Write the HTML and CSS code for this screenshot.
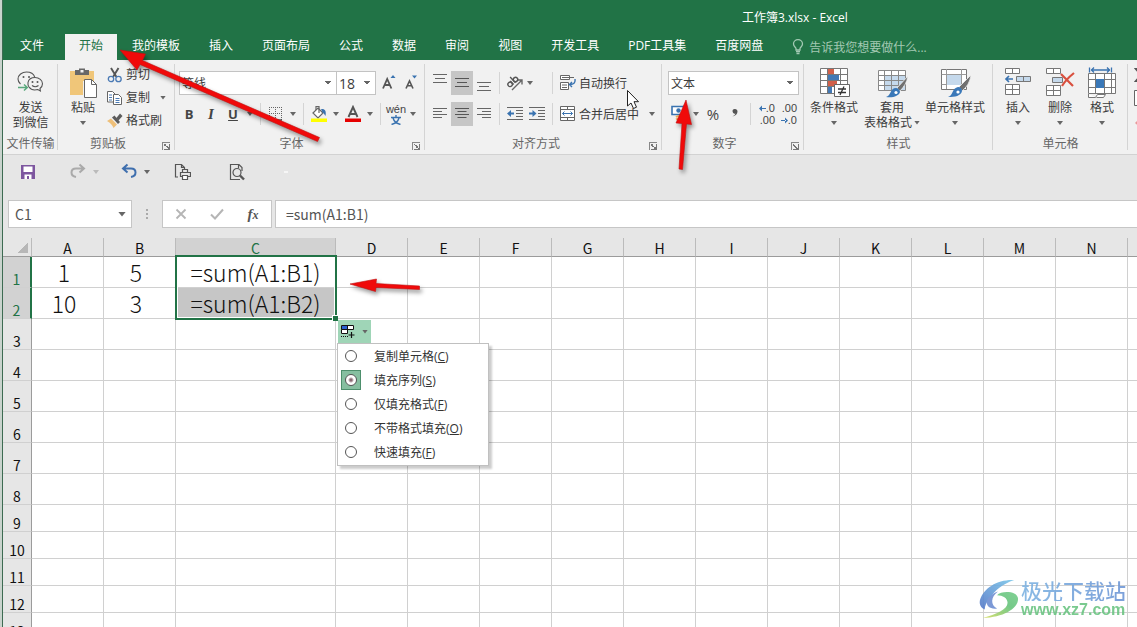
FILE: index.html
```html
<!DOCTYPE html>
<html lang="zh-CN">
<head>
<meta charset="utf-8">
<title>工作簿3.xlsx - Excel</title>
<link rel="stylesheet" href="styles.css">
</head>
<body>
<div class="app">
  <header class="titlebar"><h1 class="doc-title">工作簿3.xlsx - Excel</h1></header>
  <nav class="tabs">
    <button class="tab tab-file">文件</button>
    <button class="tab tab-active">开始</button>
    <button class="tab">我的模板</button>
    <button class="tab">插入</button>
    <button class="tab">页面布局</button>
    <button class="tab">公式</button>
    <button class="tab">数据</button>
    <button class="tab">审阅</button>
    <button class="tab">视图</button>
    <button class="tab">开发工具</button>
    <button class="tab">PDF工具集</button>
    <button class="tab">百度网盘</button>
    <button class="tab tell-me">
      <svg width="12" height="16" viewBox="0 0 12 16" fill="none" stroke="currentColor" stroke-width="1.3"><path d="M4 11V9.500C4 8.500 1.500 7.500 1.500 5a4.500 4.300 0 0 1 9 0C10.500 7.500 8 8.500 8 9.500V11z"/><path d="M4 12.500h4M4.500 14.500h3" stroke-width="1.600"/></svg>
      <span>告诉我您想要做什么...</span>
    </button>
  </nav>

  <div class="ribbon">
    <section class="group g-send">
      <div class="group-body row-top">
        <button class="big">
          <svg class="big-icon" width="28" height="32" viewBox="0 0 28 32" fill="none" stroke="#555" stroke-width="1.100"><path d="M3.500 17C1.800 15.500 1 14 1 12 1 8 5 5 9.500 5c4 0 7.200 2 8.200 5"/><path d="M12 20c-1-1.500-1.300-3-1-4.500.6-3 3.500-5 7-5 4.200 0 7.500 2.800 7.500 6.300 0 2-1 3.500-2.500 4.700l.4 2.500-2.600-1.500c-3 .8-6.800.3-8.800-2.500z"/><g fill="#555" stroke="none"><circle cx="6.500" cy="10" r="1"/><circle cx="12" cy="10" r="1"/><circle cx="15.500" cy="15" r="1"/><circle cx="20.500" cy="15" r="1"/></g><path d="M15 18.500c2 1.500 4.500 1.500 6.500 0"/><path d="M1 20.500h9M7 17.500l3.300 3L7 23.500" stroke="#5aa87c" stroke-width="1.500"/></svg>
          <span>发送</span><span>到微信</span>
        </button>
      </div>
      <div class="group-label">文件传输</div>
    </section>

    <section class="group g-clip">
      <div class="group-body row-top">
        <button class="big w-paste">
          <svg class="big-icon" width="30" height="32" viewBox="0 0 30 32"><path d="M2 4h24v10H15v14H2z" fill="#f0c679"/><path d="M7 3h4V1.500h6V3h4v5H7z" fill="#686868"/><rect x="12.500" y="3" width="3" height="2.500" fill="#f1f1f1"/><path d="M16.500 12.500h7l5 5v13h-12z" fill="#fff" stroke="#666"/><path d="M23.500 12.500v5h5" fill="none" stroke="#666"/></svg>
          <span>粘贴</span><i class="caret"></i>
        </button>
        <div class="stack">
          <button class="item"><svg width="16" height="16" viewBox="0 0 16 16" fill="none"><path d="M4 1l5.500 9M11.500 1L6 10" stroke="#555" stroke-width="1.900"/><circle cx="4" cy="12" r="2.700" stroke="#4a7ab5" stroke-width="1.300"/><circle cx="11.500" cy="12" r="2.700" stroke="#4a7ab5" stroke-width="1.300"/></svg><span>剪切</span></button>
          <button class="item"><svg width="16" height="16" viewBox="0 0 16 16" fill="#fff" stroke="#666"><path d="M.5 1.500h5l2.500 2.500v8H.5z"/><path d="M2 5h3M2 7.500h3M2 10h3" stroke="#4a7ab5"/><path d="M6.500 4.500h5l3 3v7h-8z"/><path d="M8.500 8.500h4M8.500 10.500h4M8.500 12.500h4" stroke="#4a7ab5"/></svg><span>复制</span><i class="caret"></i></button>
          <button class="item"><svg width="16" height="16" viewBox="0 0 16 16"><path d="M0 8l4-2.500 6 6L6.500 15c-1-3-3-5-6.500-7z" fill="#eebf78"/><path d="M5 4.500l2.500-2 5.500 6.500-2 2z" fill="#5c5c5c"/><path d="M9 5.500l4-5 2.500 2.500-4 4.500z" fill="#5c5c5c"/></svg><span>格式刷</span></button>
        </div>
      </div>
      <div class="group-label">剪贴板</div><button class="launcher" aria-label="剪贴板设置"></button>
    </section>

    <section class="group g-font">
      <div class="group-body rows">
        <div class="row"><select class="combo font-name" aria-label="字体"><option>等线</option></select><select class="combo font-size" aria-label="字号"><option>18</option></select><button class="ib grow" aria-label="增大字号"><svg width="16" height="18" viewBox="0 0 16 18"><path d="M2 14.500L6.200 5l4.200 9.500M3.800 11h5" fill="none" stroke="#555" stroke-width="1.800"/><path d="M9.500 4l2.500-3 2.500 3z" fill="#3a73b0"/></svg></button><button class="ib" aria-label="减小字号"><svg width="16" height="18" viewBox="0 0 16 18"><path d="M2 14.500L5.500 7 9 14.500M3.500 11.700h4" fill="none" stroke="#555" stroke-width="1.600"/><path d="M8 1.500l2.500 3 2.500-3z" fill="#3a73b0"/></svg></button></div>
        <div class="row"><button class="ib glyph"><b>B</b></button><button class="ib glyph"><em>I</em></button><button class="ib glyph"><u>U</u></button><button class="cb" aria-label="下划线"><i class="caret"></i></button><i class="sep"></i><button class="ib" aria-label="边框"><svg width="14" height="14" viewBox="0 0 14 14" stroke="#666" fill="none"><path d="M0 .5h13M0 6.500h13M.5 0v13M6.500 0v13M12.500 0v13" stroke-dasharray="1 1"/><path d="M0 13h13" stroke="#444" stroke-width="1.300"/></svg></button><button class="cb" aria-label="边框选项"><i class="caret"></i></button><i class="sep"></i><button class="ib" aria-label="填充颜色"><svg width="18" height="18" viewBox="0 0 18 18"><path d="M3 8l5-5 5 5-5 5z" fill="#fff" stroke="#666" stroke-width="1.200"/><path d="M6 5V1.500h3V8" fill="none" stroke="#666" stroke-width="1.200"/><path d="M11 4c4-.5 5.500 2 4.500 7-1-1-1.500-3-3-3.500z" fill="#3a73b0"/><path d="M1 13.500h16V17H1z" fill="#ff0"/></svg></button><button class="cb" aria-label="填充选项"><i class="caret"></i></button><button class="ib" aria-label="字体颜色"><svg width="18" height="18" viewBox="0 0 18 18"><path d="M4.500 12L9 2l4.500 10M6 9h6" fill="none" stroke="#555" stroke-width="1.900"/><path d="M1 13.500h16V17H1z" fill="#e60000"/></svg></button><button class="cb" aria-label="颜色选项"><i class="caret"></i></button><i class="sep"></i><button class="ib pinyin"><span>wén</span><svg width="10" height="10" viewBox="0 0 10 10" fill="none" stroke="#3a73b0" stroke-width="1.400"><path d="M5 0v2M0 2.500h10M2 3c1 3.500 3.500 5.500 7.500 6.500M8 3C7 6.500 4.500 8.500.5 9.500"/></svg></button><button class="cb" aria-label="拼音选项"><i class="caret"></i></button></div>
      </div>
      <div class="group-label">字体</div><button class="launcher" aria-label="字体设置"></button>
    </section>

    <section class="group g-align">
      <div class="group-body rows">
        <div class="row"><button class="ib" aria-label="顶端对齐"><svg width="14" height="18" viewBox="0 0 14 18" stroke="#666"><path d="M0 .5h14M2 4.500h10M0 8.500h14"/></svg></button><button class="ib on" aria-label="垂直居中"><svg width="14" height="18" viewBox="0 0 14 18" stroke="#555"><path d="M0 4.500h14M2 8.500h10M0 12.500h14"/></svg></button><button class="ib" aria-label="底端对齐"><svg width="14" height="18" viewBox="0 0 14 18" stroke="#666"><path d="M0 8.500h14M2 12.500h10M0 16.500h14"/></svg></button><i class="sep"></i><button class="orient" aria-label="方向"><svg width="18" height="18" viewBox="0 0 18 18" fill="none" stroke="#555" stroke-width="1.400"><path d="M6 16L15.500 6.500M11.500 6h4.500v4.500" stroke="#666"/><g transform="rotate(-42 6 8)"><circle cx="3" cy="8.500" r="2.200"/><path d="M5.500 6v5M8 3v8"/><circle cx="10.300" cy="8.500" r="2.200"/></g></svg><i class="caret"></i></button><i class="sep"></i><button class="item"><svg width="16" height="16" viewBox="0 0 16 16" fill="none" stroke="#666"><path d="M.5.500h9v4h-9zM.5 7.500h8v7h-8z" fill="#fff"/><path d="M2 2.500h12M2 10h5M2 12.500h5"/><path d="M15 4c.5 4-1.500 5.500-5 5.500M12 7l-2.500 2.500L12 12" stroke="#3a73b0" stroke-width="1.400"/></svg><span>自动换行</span></button></div>
        <div class="row"><button class="ib" aria-label="左对齐"><svg width="14" height="14" viewBox="0 0 14 14" stroke="#666"><path d="M0 1.500h14M0 4.500h9M0 7.500h14M0 10.500h9"/></svg></button><button class="ib on" aria-label="居中"><svg width="14" height="14" viewBox="0 0 14 14" stroke="#555"><path d="M0 1.500h14M2.500 4.500h9M0 7.500h14M2.500 10.500h9"/></svg></button><button class="ib" aria-label="右对齐"><svg width="14" height="14" viewBox="0 0 14 14" stroke="#666"><path d="M0 1.500h14M5 4.500h9M0 7.500h14M5 10.500h9"/></svg></button><i class="sep"></i><button class="ib" aria-label="减少缩进量"><svg width="16" height="14" viewBox="0 0 16 14" stroke="#666"><path d="M0 .5h16M9 3.500h7M9 6.500h7M9 9.500h7M0 12.500h16"/><path d="M7 6.500H3" stroke="#3a73b0" stroke-width="2"/><path d="M0 6.500l4-3.500v7z" fill="#3a73b0" stroke="none"/></svg></button><button class="ib" aria-label="增加缩进量"><svg width="16" height="14" viewBox="0 0 16 14" stroke="#666"><path d="M0 .5h16M9 3.500h7M9 6.500h7M9 9.500h7M0 12.500h16"/><path d="M0 6.500h4" stroke="#3a73b0" stroke-width="2"/><path d="M7.500 6.500L3.500 3v7z" fill="#3a73b0" stroke="none"/></svg></button><i class="sep"></i><button class="item"><svg width="16" height="16" viewBox="0 0 16 16" fill="#fff" stroke="#666"><path d="M.5.500h14v14H.5zM.5 3.500h14M.5 11.500h14M7.500.500v3M7.500 11.500v3"/><path d="M2.500 7.500h10M4.500 5.500l-2 2 2 2M10.500 5.500l2 2-2 2" stroke="#3a73b0" fill="none"/></svg><span>合并后居中</span><i class="caret"></i></button></div>
      </div>
      <div class="group-label">对齐方式</div><button class="launcher" aria-label="对齐设置"></button>
    </section>

    <section class="group g-num">
      <div class="group-body rows">
        <div class="row"><select class="combo num-format" aria-label="数字格式"><option>文本</option></select></div>
        <div class="row"><button class="ib" aria-label="会计数字格式"><svg width="16" height="18" viewBox="0 0 16 18"><path d="M1 1.500h14v8H1z" fill="#fff" stroke="#3a73b0" stroke-width="1.600"/><circle cx="7.500" cy="5.500" r="2.200" fill="#3a73b0"/><path d="M5 12c2-1.500 6-1.500 8 0M5 14.500c2-1.500 6-1.500 8 0" fill="none" stroke="#eeab5c" stroke-width="1.800"/></svg></button><button class="cb" aria-label="货币选项"><i class="caret"></i></button><button class="ib percent">%</button><button class="ib" aria-label="千位分隔样式"><svg width="8" height="14" viewBox="0 0 8 14"><path d="M4 2a2.300 2.300 0 1 0 .5 4.500C4 8 3 8.500 1.500 9.500 4.500 9 6.500 7 6.500 4.500 6.500 3 5.500 2 4 2z" fill="#555"/></svg></button><i class="sep"></i><button class="ib decimals"><span><svg width="7" height="7" viewBox="0 0 7 7"><path d="M0 3.500l3-3v6zM2 3h5v1H2z" fill="#3a73b0"/></svg>.0</span><span>.00</span></button><button class="ib decimals"><span>.00</span><span><svg width="7" height="7" viewBox="0 0 7 7"><path d="M7 3.500l-3-3v6zM0 3h5v1H0z" fill="#3a73b0"/></svg>.0</span></button></div>
      </div>
      <div class="group-label">数字</div><button class="launcher" aria-label="数字设置"></button>
    </section>

    <section class="group g-style">
      <div class="group-body row-top">
        <button class="big w-cond"><svg class="big-icon" width="32" height="32" viewBox="0 0 32 32"><path d="M2.500 1.500h27v25h-27z" fill="#fff"/><path d="M10 2h6v5h-6zM10 14h9v5h-9z" fill="#d2604a"/><path d="M10 8h11v5H10zM10 20h4v6h-4z" fill="#4479b5"/><path d="M2.500 1.500h27v25h-27zM2.500 7.500h27M2.500 13.500h27M2.500 19.500h27M9.500 1v25M22.500 1v25" fill="none" stroke="#777"/><path d="M16.500 17.500h15v12h-15z" fill="#fff" stroke="#666"/><path d="M20 22h8M20 25.500h8M26 19.500l-4 8.500" stroke="#333" stroke-width="1.300"/></svg><span>条件格式</span><i class="caret"></i></button>
        <button class="big w-table"><svg class="big-icon" width="32" height="32" viewBox="0 0 32 32"><path d="M2.500 3.500h27v20h-27z" fill="#fff"/><path d="M9 9h20v14H9z" fill="#c5d9ec"/><path d="M2.500 3.500h27v20h-27zM2.500 8.500h27M2.500 13.500h27M2.500 18.500h27M8.500 3v20M15.500 3v20M22.500 3v20" fill="none" stroke="#888"/><path d="M32 9L21 21l3 3c4-4 7-9 8-15z" fill="#707070" stroke="#f1f1f1" stroke-width=".8"/><path d="M20 21c2 0 4 2 4 4-1 4-7 6-14 5 5-1 4-9 10-9z" fill="#3a78b8"/><circle cx="20" cy="25.500" r="1.600" fill="#fff"/></svg><span>套用</span><span class="with-caret">表格格式<i class="caret"></i></span></button>
        <button class="big w-cell"><svg class="big-icon" width="32" height="32" viewBox="0 0 32 32"><path d="M2.500 2.500h25v20h-25z" fill="#fff" stroke="#777"/><path d="M2.500 7.500h25M2.500 17.500h25M7.500 2v20M22.500 2v20" stroke="#999"/><path d="M8 8h14v10H8z" fill="#c5d9ec"/><path d="M32 8L20 20l3 4c5-4 8-9 9-16z" fill="#707070" stroke="#f1f1f1" stroke-width=".8"/><path d="M19 20c3 0 4 2 4 4-1 5-7 6-14 6 5-1 4-9 10-10z" fill="#3a78b8"/><circle cx="19" cy="25" r="1.600" fill="#fff"/></svg><span>单元格样式</span><i class="caret"></i></button>
      </div>
      <div class="group-label">样式</div>
    </section>

    <section class="group g-cells">
      <div class="group-body row-top">
        <button class="big w-small"><svg class="big-icon" width="28" height="32" viewBox="0 0 28 32" fill="#fff" stroke="#777"><path d="M1.500 1.500h14v5h-14zM8.500 1.500v5M1.500 17.500h14v10h-14zM1.500 22.500h14M8.500 17.500v10"/><path d="M12.500 9.500h14v5h-14zM19.500 9.500v5" fill="#c5d9ec"/><path d="M2 12h7M5 9l-3 3 3 3" stroke="#3a73b0" stroke-width="1.700" fill="none"/></svg><span>插入</span><i class="caret"></i></button>
        <button class="big w-small"><svg class="big-icon" width="30" height="32" viewBox="0 0 30 32" fill="#fff" stroke="#777"><path d="M1.500 1.500h14v5h-14zM8.500 1.500v5M1.500 18.500h14v10h-14zM1.500 23.500h14M8.500 18.500v10"/><path d="M7.500 10.500h10v5h-10z" fill="#c5d9ec"/><path d="M16 7l12 12M29 6C24 10 20 14 17 19" stroke="#d9503f" stroke-width="2.200" fill="none"/></svg><span>删除</span><i class="caret"></i></button>
        <button class="big w-small"><svg class="big-icon" width="30" height="32" viewBox="0 0 30 32" fill="#fff" stroke="#777"><path d="M2.500.500v5M24.500.500v5M4 3h19M7 .500L4.500 3 7 5.500M20 .500L22.500 3 20 5.500" stroke="#3a73b0" fill="none" stroke-width="1.300"/><path d="M1.500 6.500h27v20h-27zM1.500 12.500h27M1.500 20.500h27M8.500 6v20M17.500 6v20M24.500 6v20"/><path d="M9 12h8v9H9z" fill="#3a78b8" stroke="none"/><path d="M1.500 27v3.500h7l2-3h8l-2 3h-7"/></svg><span>格式</span><i class="caret"></i></button>
      </div>
      <div class="group-label">单元格</div>
    </section>
    <section class="group g-edit">
      <div class="group-body stack"><button class="item" aria-label="自动求和"><svg width="16" height="16" viewBox="0 0 16 16" fill="none" stroke="#555" stroke-width="2"><path d="M13 2H2l5 6-5 6h11"/></svg></button><button class="item" aria-label="填充"><svg width="16" height="16" viewBox="0 0 16 16"><path d="M.5.500h13v15H.5z" fill="#fff" stroke="#666"/></svg></button><button class="item" aria-label="清除"><svg width="16" height="16" viewBox="0 0 16 16"><path d="M1 10l7-7 6 5-7 7z" fill="#e79a9a"/></svg></button></div>
    </section>
  </div>

  <div class="qat">
    <button class="qb" aria-label="保存"><svg width="16" height="16" viewBox="0 0 16 16"><path d="M1 1h14v14H1z" fill="#7d569f"/><path d="M3.500 2.500h9v5.500h-9zM4.500 10.500h7V15H9v-3H7v3H4.500z" fill="#fff"/></svg></button>
    <span class="qpair"><button class="qb" aria-label="恢复"><svg width="16" height="16" viewBox="0 0 16 16" fill="none" stroke="#aaa" stroke-width="2"><path d="M9.500 1.500L14 5.500l-4.500 4M14 5.500H6c-3 0-4.500 1.800-4.500 4S3 13.500 6 14"/></svg></button><button class="cb" aria-label="恢复选项"><i class="caret faint"></i></button></span>
    <span class="qpair"><button class="qb" aria-label="撤消"><svg width="16" height="16" viewBox="0 0 16 16" fill="none" stroke="#3f6fae" stroke-width="2"><path d="M6.500 1.500L2 5.500l4.500 4M2 5.500h8c3 0 4.500 1.800 4.500 4S13 13.500 10 14"/></svg></button><button class="cb" aria-label="撤消选项"><i class="caret"></i></button></span>
    <button class="qb" aria-label="快速打印"><svg width="18" height="18" viewBox="0 0 18 18" fill="none" stroke="#555" stroke-width="1.200"><path d="M5 14H2.500V1.500h6l3 3V6M8.500 1.500v3h3"/><path d="M9.500 9V6.500h5V9M7.500 9.500h10v4h-10z"/><path d="M9.500 12.500h5v4h-5z" fill="#fff"/></svg></button>
    <button class="qb" aria-label="打印预览"><svg width="18" height="18" viewBox="0 0 18 18" fill="none" stroke="#555" stroke-width="1.200"><path d="M15 8V4.500l-3-3H3.500v15H13M11.500 1.500V5"/><circle cx="10" cy="9.500" r="4"/><path d="M13 12.500l4 4" stroke-width="2.400"/></svg></button>
    <i class="qmore"></i>
  </div>

  <div class="formula">
    <div class="namebox"><input value="C1" aria-label="名称框"><button class="cb" aria-label="名称列表"><i class="caret wide"></i></button></div>
    <i class="dots"></i>
    <div class="fx-box">
      <button aria-label="取消"><svg width="12" height="12" viewBox="0 0 12 12"><path d="M1.500 1.500l9 9M10.500 1.500l-9 9" stroke="#b5b5b5" stroke-width="1.800"/></svg></button>
      <button aria-label="输入"><svg width="14" height="12" viewBox="0 0 14 12"><path d="M1 6.500l4 4 8-9" fill="none" stroke="#b5b5b5" stroke-width="2"/></svg></button>
      <button class="fx"><em>f<small>x</small></em></button>
    </div>
    <input class="fx-input" value="=sum(A1:B1)" aria-label="编辑栏">
  </div>

  <main class="sheet">
    <table class="grid">
      <colgroup><col class="c-head"><col><col><col class="c-wide"><col span="12"></colgroup>
      <thead><tr><th class="corner"></th><th>A</th><th>B</th><th class="sel">C</th><th>D</th><th>E</th><th>F</th><th>G</th><th>H</th><th>I</th><th>J</th><th>K</th><th>L</th><th>M</th><th>N</th><th></th></tr></thead>
      <tbody>
        <tr class="tall"><th class="sel">1</th><td class="num">1</td><td class="num">5</td>
          <td class="anchor">=sum(A1:B1)
            <div class="selection"><i class="handle"></i></div>
            <div class="autofill">
              <button class="af-btn" aria-label="自动填充选项"><svg width="16" height="16" viewBox="0 0 16 16"><path d="M1 1h13v4.500H7V10H1z" fill="#fff"/><path d="M1.500 1.500h6v4h-6z" fill="#2a5fd0"/><path d="M1.500 1.500h12v4h-12zM7.500 1.500v8h-6v-4" fill="none" stroke="#111"/><path d="M1 12.500h8" stroke="#111" stroke-dasharray="1 1"/><path d="M11.500 8v6M8.500 11h6" stroke="#111" stroke-width="1.200"/></svg><i class="caret"></i></button>
              <div class="af-menu">
                <label class="opt"><input type="radio" name="fill"><span>复制单元格(<u>C</u>)</span></label>
                <label class="opt"><input type="radio" name="fill" checked><span>填充序列(<u>S</u>)</span></label>
                <label class="opt"><input type="radio" name="fill"><span>仅填充格式(<u>F</u>)</span></label>
                <label class="opt"><input type="radio" name="fill"><span>不带格式填充(<u>O</u>)</span></label>
                <label class="opt"><input type="radio" name="fill"><span>快速填充(<u>F</u>)</span></label>
              </div>
            </div>
          </td><td></td><td></td><td></td><td></td><td></td><td></td><td></td><td></td><td></td><td></td><td></td><td></td></tr>
        <tr class="tall"><th class="sel">2</th><td class="num">10</td><td class="num">3</td><td class="filled">=sum(A1:B2)</td><td></td><td></td><td></td><td></td><td></td><td></td><td></td><td></td><td></td><td></td><td></td><td></td></tr>
        <tr class="tall"><th>3</th><td></td><td></td><td></td><td></td><td></td><td></td><td></td><td></td><td></td><td></td><td></td><td></td><td></td><td></td><td></td></tr>
        <tr class="tall"><th>4</th><td></td><td></td><td></td><td></td><td></td><td></td><td></td><td></td><td></td><td></td><td></td><td></td><td></td><td></td><td></td></tr>
        <tr class="tall"><th>5</th><td></td><td></td><td></td><td></td><td></td><td></td><td></td><td></td><td></td><td></td><td></td><td></td><td></td><td></td><td></td></tr>
        <tr class="tall"><th>6</th><td></td><td></td><td></td><td></td><td></td><td></td><td></td><td></td><td></td><td></td><td></td><td></td><td></td><td></td><td></td></tr>
        <tr class="tall"><th>7</th><td></td><td></td><td></td><td></td><td></td><td></td><td></td><td></td><td></td><td></td><td></td><td></td><td></td><td></td><td></td></tr>
        <tr class="tall"><th>8</th><td></td><td></td><td></td><td></td><td></td><td></td><td></td><td></td><td></td><td></td><td></td><td></td><td></td><td></td><td></td></tr>
        <tr><th>9</th><td></td><td></td><td></td><td></td><td></td><td></td><td></td><td></td><td></td><td></td><td></td><td></td><td></td><td></td><td></td></tr>
        <tr><th>10</th><td></td><td></td><td></td><td></td><td></td><td></td><td></td><td></td><td></td><td></td><td></td><td></td><td></td><td></td><td></td></tr>
        <tr><th>11</th><td></td><td></td><td></td><td></td><td></td><td></td><td></td><td></td><td></td><td></td><td></td><td></td><td></td><td></td><td></td></tr>
        <tr><th>12</th><td></td><td></td><td></td><td></td><td></td><td></td><td></td><td></td><td></td><td></td><td></td><td></td><td></td><td></td><td></td></tr>
        <tr><th>13</th><td></td><td></td><td></td><td></td><td></td><td></td><td></td><td></td><td></td><td></td><td></td><td></td><td></td><td></td><td></td></tr>
      </tbody>
    </table>
  </main>
</div>

<svg class="marks" width="1137" height="627" viewBox="0 0 1137 627" aria-hidden="true">
  <g fill="#f00a0a" stroke="#c01010" stroke-width=".6">
    <path d="M120 50L145.500 54 142.500 60.500 319.500 137.500 317.500 141.500 140 64.500 137 70z"/>
    <path d="M686 100L691.500 124.500 686.500 124 682.500 169.500 679 169 682 123.500 676 123z"/>
    <path d="M350 284L376.500 279 376 283.500 419.500 286 419.500 289.500 376 287.500 375.500 291.500z"/>
  </g>
  <path d="M627.500 90.500v15.500l3.500-3 2.500 5.500 3-1.300-2.500-5.500h4.500z" fill="#fff" stroke="#222"/>
</svg>

<div class="watermark">
  <svg width="42" height="40" viewBox="0 0 42 42">
    <defs><linearGradient id="wb" x1="0" y1="1" x2="1" y2="0"><stop offset="0" stop-color="#5578c8"/><stop offset="1" stop-color="#7cc8ea"/></linearGradient><linearGradient id="wg" x1="0" y1="1" x2="1" y2="0"><stop offset="0" stop-color="#d8dd62"/><stop offset=".6" stop-color="#67c47c"/><stop offset="1" stop-color="#74cc8a"/></linearGradient></defs>
    <path d="M37 1C20 0 5 9 1 22c-1 5 1 8 5 10 0-4 2-8 5-11 5-9 14-16 26-20z" fill="url(#wb)"/>
    <path d="M20 13c-8 6-8 14-1 18-7 1-11-2-11-7 1-5 6-9 12-11z" fill="#6e8fd2"/>
    <path d="M19 17c4-5 22-5 22 4 0 10-15 19-37 20 14-4 26-9 26-16 0-5-5-8-11-8z" fill="url(#wg)"/>
  </svg>
  <div class="wm-text"><span class="wm-name">极光下载站</span><span class="wm-url">www.xz7.com</span></div>
</div>
</body>
</html>
```
FILE: styles.css
```css
* { box-sizing: border-box; }
body {
  margin: 0;
  height: 100vh;
  overflow: hidden;
  position: relative;
  background: #c9d3cd;
  font: 12px/15px "Open Sans", "Noto Sans CJK SC", sans-serif;
  color: #3c3c3c;
}
button, input, select { font: inherit; color: inherit; border: 0; margin: 0; padding: 0; background: none; }
button { white-space: nowrap; }
svg { display: block; flex: none; }
.app {
  display: flex;
  flex-direction: column;
  height: 100%;
  margin-left: 2px;
  border-left: 1px solid #3d6b52;
  background: #e6e6e6;
  overflow: hidden;
}

/* title and tabs */
.titlebar { flex: none; height: 34px; padding: 10px 0 0 739px; background: #217346; }
.doc-title { margin: 0; font-size: 12px; line-height: 15px; font-weight: 400; color: #fff; white-space: nowrap; }
.tabs { flex: none; display: flex; gap: 1px; height: 26px; padding-left: 3px; background: #217346; }
.tab { flex: none; padding: 0 14px 3px; color: #fff; }
.tab-file { margin-right: 6px; }
.tab-active { background: #f1f1f1; color: #217346; }
.tell-me { display: flex; align-items: center; gap: 5px; padding-bottom: 0; color: #a3c9b3; }

/* ribbon */
.ribbon { flex: none; display: flex; height: 95px; background: #f1f1f1; border-bottom: 1px solid #d2d2d2; overflow: hidden; }
.group { flex: none; position: relative; }
.group::after { content: ""; position: absolute; right: 0; top: 4px; bottom: 4px; width: 1px; background: #d4d4d4; }
.group-body { height: 75px; }
.group-label { text-align: center; line-height: 18px; color: #666; white-space: nowrap; }
.row-top { display: flex; align-items: flex-start; }
.rows { display: flex; flex-direction: column; gap: 7px; padding-top: 11px; }
.row { display: flex; align-items: center; height: 24px; }
.stack { display: flex; flex-direction: column; padding-top: 3px; }
.g-send { width: 55px; }
.g-clip { width: 117px; }
.g-clip .group-label { padding-right: 17px; }
.g-font { width: 250px; }
.g-font .rows { padding-left: 3px; }
.g-font .group-label, .g-num .group-label { padding-right: 17px; }
.g-align { width: 237px; }
.g-align .rows { padding-left: 4px; }
.g-align .group-label { padding-right: 15px; }
.g-num { width: 142px; }
.g-num .rows { padding-left: 6px; }
.g-style { width: 189px; }
.g-style .row-top { padding-left: 2px; }
.g-cells { width: 135px; }
.g-cells .row-top { padding-left: 4px; }
.g-edit { width: 140px; padding-left: 3px; }

.big { display: flex; flex-direction: column; align-items: center; padding-top: 7px; }
.big-icon { margin-bottom: 1px; }
.big > .caret { margin-top: 6px; }
.g-send .big { width: 100%; }
.w-paste { width: 42px; margin-left: 4px; }
.w-cond { width: 56px; }
.w-table { width: 60px; }
.w-cell { width: 66px; }
.w-small { width: 42px; }
.with-caret { display: flex; align-items: center; gap: 2px; }
.caret { display: block; flex: none; width: 6px; height: 4px; background: #666; clip-path: polygon(0 0, 100% 0, 50% 100%); }
.caret.wide { width: 8px; height: 5px; }
.caret.faint { background: #bbb; }
.item { display: flex; align-items: center; gap: 3px; height: 23px; padding: 0 3px; }
.item .caret { margin-left: 7px; }
.ib { display: flex; flex: none; align-items: center; justify-content: center; width: 22px; height: 24px; }
.ib.grow { width: 25px; }
.ib.on { background: #c6c6c6; }
.cb { display: flex; flex: none; align-items: center; justify-content: center; width: 12px; height: 24px; }
.sep { flex: none; width: 1px; height: 22px; margin: 0 4px; background: #d4d4d4; }
.orient { display: flex; align-items: center; gap: 3px; width: 44px; height: 24px; padding-left: 2px; }
.glyph { font-size: 13px; color: #444; }
.glyph em { font-family: "Liberation Serif", serif; font-weight: 700; font-size: 15px; }
.glyph u { font-weight: 700; }
.percent { font-size: 15px; color: #444; }
.pinyin, .decimals { flex-direction: column; font: 11px/12px "Liberation Sans", sans-serif; color: #444; }
.decimals { align-items: flex-end; padding-right: 2px; }
.decimals span { display: flex; align-items: center; }
.combo {
  appearance: none;
  height: 24px;
  padding: 0 2px;
  border: 1px solid #c3c3c3;
  border-radius: 0;
  background: #fff conic-gradient(from -37deg at 50% 100%, #666 74deg, transparent 0) no-repeat right 5px center / 6px 4px;
  background: #fff linear-gradient(#666, #666) no-repeat right 6px top 9px / 5px 1px;
  background:
    linear-gradient(#666, #666) no-repeat right 5px top 9px / 6px 1px,
    linear-gradient(#666, #666) no-repeat right 6px top 10px / 4px 1px,
    linear-gradient(#666, #666) no-repeat right 7px top 11px / 2px 1px,
    #fff;
}
.font-name { width: 158px; margin-left: 1px; }
.font-size { width: 40px; margin-left: -1px; font-size: 14px; }
.num-format { width: 131px; }
.launcher { position: absolute; right: 5px; bottom: 4px; width: 8px; height: 8px; border: solid #888; border-width: 1px 0 0 1px; }
.launcher::after { content: ""; position: absolute; right: 0; bottom: 0; width: 5px; height: 5px; border: solid #777; border-width: 0 1px 1px 0; background: linear-gradient(45deg, transparent 40%, #777 40% 60%, transparent 60%); }

/* quick access */
.qat { flex: none; display: flex; align-items: center; height: 34px; padding-left: 14px; }
.qb { display: flex; align-items: center; justify-content: center; width: 22px; height: 22px; }
.qpair { display: flex; gap: 1px; margin-left: 28px; }
.qpair + .qpair { margin-left: 16px; }
.qpair + .qb { margin-left: 18px; }
.qb + .qb { margin-left: 32px; }
.qmore { width: 4px; height: 2px; margin-left: 37px; background: #f6f6f6; }

/* formula bar */
.formula { flex: none; display: flex; align-items: stretch; height: 28px; margin: 11px 0 10px 5px; color: #555; font: 14px/20px "Noto Sans CJK SC", sans-serif; }
.namebox { display: flex; width: 124px; border: 1px solid #c6c6c6; background: #fff; }
.namebox input { flex: 1; min-width: 0; padding-left: 6px; }
.namebox .cb { width: 18px; height: 26px; }
.dots { align-self: center; width: 2px; height: 10px; margin: 0 14px; background: repeating-linear-gradient(#aaa 0 2px, transparent 2px 4px); }
.fx-box { display: flex; width: 110px; border: 1px solid #c6c6c6; background: #fff; }
.fx-box button { flex: 1; display: flex; align-items: center; justify-content: center; }
.fx-box .fx { font: 700 15px/20px "Liberation Serif", serif; }
.fx small { font-size: 12px; }
.fx-input { flex: 1; min-width: 0; margin-left: 3px; padding-left: 10px; border: 1px solid #c6c6c6; border-right: 0; background: #fff; }

/* worksheet */
.sheet { flex: 1; min-height: 0; overflow: hidden; background: #fff; }
.grid { table-layout: fixed; width: 1197px; border-spacing: 0; font-family: "Noto Sans CJK SC", sans-serif; font-weight: 300; color: #111; }
.grid col { width: 72px; }
.grid .c-head { width: 29px; }
.grid .c-wide { width: 160px; }
.grid th, .grid td { padding: 0; height: 27px; border: solid #d0d0d0; border-width: 0 1px 1px 0; }
.grid .tall > * { height: 31px; }
.grid th { font-size: 14px; line-height: 16px; font-weight: 400; background: #e6e6e6; }
.grid thead th { height: 19px; padding-top: 2px; border-color: #bbb #bbb #9b9b9b; }
.grid tbody th { vertical-align: bottom; border-right-color: #9b9b9b; }
.grid th.sel { background: #d2d2d2; color: #217346; }
.grid tbody th.sel { border-right: 2px solid #217346; }
.grid .corner { background: linear-gradient(135deg, transparent 50%, #b7b7b7 50%) no-repeat right 3px bottom 3px / 11px 11px #e6e6e6; }
.grid td { font-size: 23px; line-height: 30px; text-align: center; white-space: nowrap; }
.grid .num { padding-right: 7px; }
.grid .filled { background: #c6c6c6; }
.grid .anchor { position: relative; }
.selection { position: absolute; left: -1px; top: -2px; right: -2px; height: 65px; border: 2px solid #217346; }
.selection::after { content: ""; position: absolute; left: 0; right: 0; bottom: 0; height: 30px; border: solid #fff; border-width: 0 1px 1px; }
.handle { position: absolute; z-index: 1; right: -3px; bottom: -3px; width: 6px; height: 6px; background: #217346; border: solid #fff; border-width: 1px 0 0 1px; }
.autofill { position: absolute; z-index: 2; left: 161px; top: 63px; font: 12px/15px "Open Sans", "Noto Sans CJK SC", sans-serif; color: #333; text-align: left; }
.af-btn { display: flex; align-items: center; gap: 6px; height: 23px; margin-left: 1px; padding: 0 3px 0 2px; background: #9fd5b7; }
.af-menu { width: 152px; padding-bottom: 1px; border: 1px solid #c0c0c0; background: #fff; box-shadow: 3px 3px 2px #0003; }
.opt { display: flex; align-items: center; gap: 13px; height: 24px; padding-left: 3px; }
.opt input { appearance: none; display: grid; place-items: center; width: 20px; height: 20px; }
.opt input::before { content: ""; width: 10px; height: 10px; border: 1px solid #555; border-radius: 50%; background: #fff; }
.opt input:checked { background: #86bfa0; border: 1px solid #4d8f6c; }
.opt input:checked::before { background: radial-gradient(circle, #8a6a72 0 1px, #fff 3px); }

/* layers over the window */
.marks { position: absolute; left: 0; top: 0; z-index: 3; pointer-events: none; }
.marks g { filter: drop-shadow(2px 3px 2px #0006); }
.watermark { position: absolute; z-index: 3; right: 11px; bottom: 8px; display: flex; gap: 1px; opacity: .9; }
.wm-text { display: flex; flex-direction: column; white-space: nowrap; }
.wm-name { font: 500 21px/22px "Noto Sans CJK SC", sans-serif; color: transparent; background: linear-gradient(90deg, #7fb4e2, #6f97d6); background-clip: text; }
.wm-url { font: 700 16px/18px "Liberation Sans", sans-serif; color: #6cc583; }
```
